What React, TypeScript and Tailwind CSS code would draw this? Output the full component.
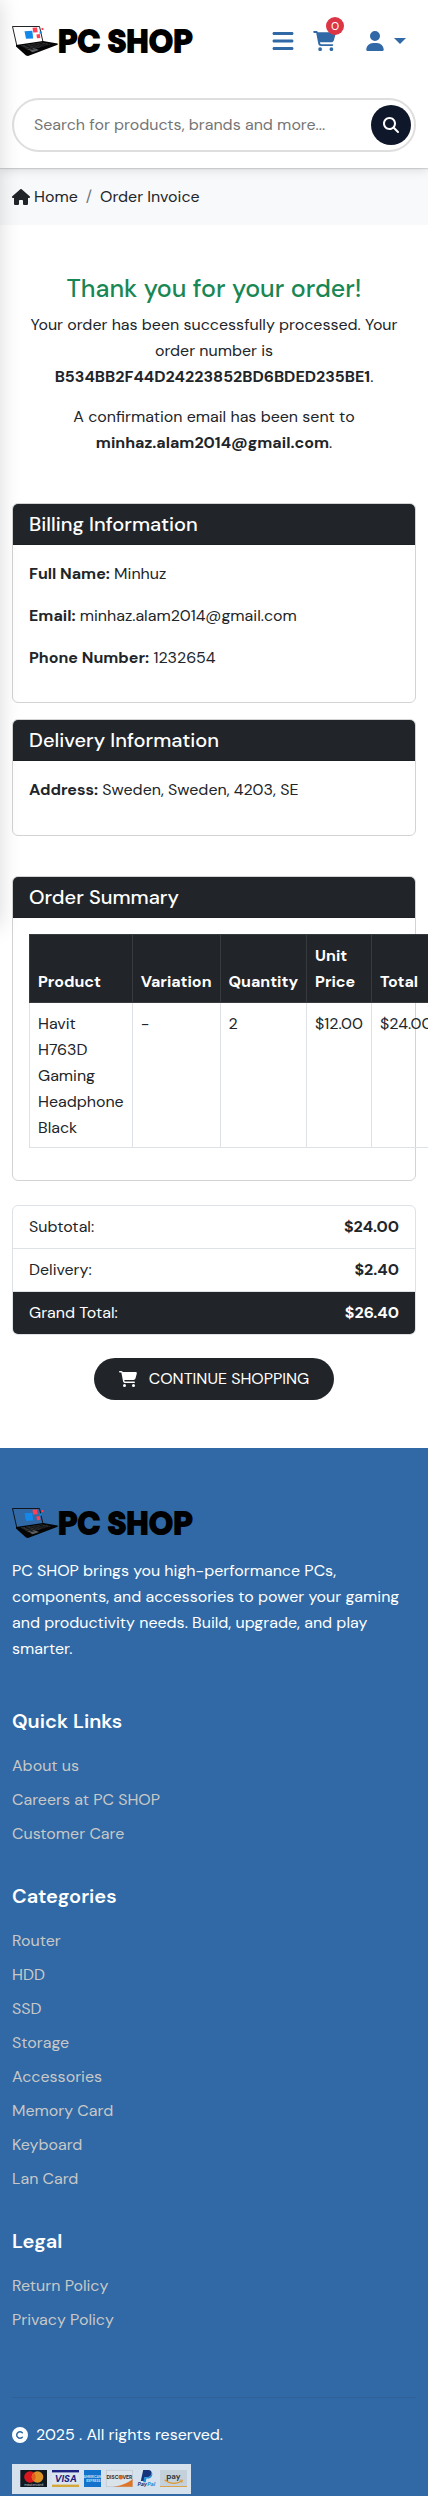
import React from 'react';
import {
  FaBars,
  FaCartShopping,
  FaCopyright,
  FaHouse,
  FaMagnifyingGlass,
  FaUser,
} from 'react-icons/fa6';

function Logo() {
  return (
    <svg viewBox="0 0 190 32" className="block h-8 w-[190px] overflow-visible" role="img" aria-label="PC SHOP">
      <path d="M0.5 1.5H27.5L31 17L5 21.5Z" fill="none" stroke="#0b0b0b" strokeWidth="0.9" strokeLinejoin="round" />
      <path d="M4 20L31 16L45.7 18.6V19.8L16 31L14 30.4L4 21.6Z" fill="#050505" />
      <path d="M8.5 20.8L29.5 17.6L38.5 19.3L17 25.2Z" fill="#4c4f52" />
      <path d="M9 21.6L31 18M11 22.7L34 18.7M13.5 24L37 19.4M13 20.2L21 24.2M18 19.5L26 23M23 18.8L31 21.6M27.5 18L35 20.4" stroke="#050505" strokeWidth="0.7" />
      <path d="M17.5 25.5L24 23.8L27 25L20.5 27.2Z" fill="#5c5f62" />
      <path d="M12.5 6.2L20.3 5.8L21.2 13.4L14 13.8Z" fill="#1488e8" />
      <path d="M20.5 2.8L25 2.4L25.7 7.2L21.2 7.6Z" fill="#ff4158" />
      <path d="M24.4 9.4L27.8 9.1L28.3 13L25 13.3Z" fill="#ff4158" />
      <path d="M27.6 6.4H29.8V8.6H27.6Z" fill="#1488e8" />
      <path d="M29.3 3.2L31.2 2.8L31.6 4.8L29.7 5.2Z" fill="#ff4158" />
      <text x="46" y="27" fontFamily="'DM Sans', sans-serif" fontSize="31" fontWeight="900" stroke="#000" strokeWidth="1.8" fill="#000">
        PC SHOP
      </text>
    </svg>
  );
}

function PaymentMethods() {
  return (
    <svg viewBox="0 0 179 30" className="block h-[30px] w-[179px]" role="img" aria-label="Accepted payment methods" fontFamily="'DM Sans', sans-serif">
      <rect width="179" height="30" fill="#d5e1ec" />
      <rect x="8.3" y="6" width="26.7" height="17" fill="#101820" />
      <circle cx="18" cy="13" r="5.8" fill="#d8171f" />
      <circle cx="25.5" cy="13" r="5.8" fill="#dd9226" />
      <path d="M21.7 8.6a5.8 5.8 0 0 1 0 8.8a5.8 5.8 0 0 1 0-8.8Z" fill="#e35f1c" />
      <text x="21.7" y="21.8" fontSize="3.6" textAnchor="middle" fill="#c5ccd2">mastercard</text>
      <rect x="40" y="6" width="27" height="17" fill="#dbe5ef" />
      <rect x="40" y="6" width="27" height="2.4" fill="#1c2380" />
      <rect x="40" y="20.6" width="27" height="2.4" fill="#d6a83a" />
      <text x="53.7" y="18" fontSize="9.5" fontWeight="800" fontStyle="italic" textAnchor="middle" fill="#1c2380">VISA</text>
      <rect x="72" y="6" width="17" height="17" fill="#1272cc" />
      <text x="80.5" y="14" fontSize="3.4" fontWeight="700" textAnchor="middle" fill="#cfe2f3">AMERICAN</text>
      <text x="81.4" y="18.4" fontSize="3.4" fontWeight="700" textAnchor="middle" fill="#cfe2f3">EXPRESS</text>
      <rect x="94.2" y="6.2" width="26.4" height="16.6" fill="#dbe3ea" stroke="#b2bbc4" strokeWidth="0.5" />
      <path d="M120.6 15V22.8H101C109 21.8 116 19 120.6 15Z" fill="#dc752a" />
      <text x="107.4" y="15.2" fontSize="5.2" fontWeight="700" textAnchor="middle" fill="#26292d">DISCOVER</text>
      <circle cx="108.8" cy="13.4" r="2.1" fill="#e2661b" />
      <path d="M131.2 6H136.2C139 6 140.2 7.8 139.5 10C138.8 12.4 137 13.3 134.5 13.3H132.6L131.9 17H128.8Z" fill="#16347c" />
      <path d="M139.9 8.6C140.9 10 140.4 14 136.4 14.6H134.4L133.7 18.3H131.2L132.2 13.3H134.5C137.3 13.3 139.6 12 139.9 8.6Z" fill="#1a8fd6" />
      <text x="134.3" y="22.3" fontSize="5.4" fontWeight="800" fontStyle="italic" textAnchor="middle" fill="#16347c">
        Pay<tspan fill="#1a8fd6">Pal</tspan>
      </text>
      <rect x="148" y="6" width="27" height="17" fill="#c4d0da" />
      <rect x="148" y="22.1" width="27" height="0.9" fill="#dc9c3c" />
      <text x="161.3" y="14.6" fontSize="8" fontWeight="600" textAnchor="middle" fill="#2a3036">pay</text>
      <path d="M153 16.2C158 20.3 165 20.2 169.6 17" fill="none" stroke="#df9426" strokeWidth="1.1" strokeLinecap="round" />
      <path d="M167.6 16.2L170.3 16L169.8 18.8" fill="none" stroke="#df9426" strokeWidth="0.9" />
    </svg>
  );
}

function Header() {
  return (
    <header className="relative z-10 bg-white px-3 pt-[25px] pb-4 shadow-[0_1px_1px_rgba(0,0,0,0.12),0_2px_10px_rgba(0,0,0,0.12)]">
      <div className="flex items-start justify-between">
        <a href="#">
          <Logo />
        </a>
        <div className="flex h-8 items-center text-[#3069a5]">
          <button type="button" aria-label="Menu">
            <FaBars className="h-6 w-[22px]" />
          </button>
          <a href="#" aria-label="Cart" className="relative ml-[19px]">
            <FaCartShopping className="h-5 w-[23px]" />
            <span className="absolute -top-[14px] left-[13px] flex size-[18px] items-center justify-center rounded-full bg-[#dc3545] text-xs leading-none text-white">
              0
            </span>
          </a>
          <button type="button" aria-label="Account" className="mr-[10px] ml-[30px] flex items-center gap-[10px]">
            <FaUser className="h-5 w-[18px]" />
            <span className="border-x-[6px] border-t-[6px] border-x-transparent border-t-[#3069a5]" />
          </button>
        </div>
      </div>
      <form
        className="mt-[41px] flex items-center rounded-full border-2 border-[#dedede] py-[5px] pr-[3px] pl-5"
        onSubmit={(e) => e.preventDefault()}
      >
        <input
          type="text"
          aria-label="Search for products, brands and more"
          placeholder="Search for products, brands and more..."
          className="min-w-0 flex-1 bg-transparent text-base outline-none placeholder:text-[#757575]"
        />
        <button type="submit" aria-label="Search" className="flex size-10 shrink-0 items-center justify-center rounded-full bg-[#0f172a] text-white">
          <FaMagnifyingGlass className="size-4" />
        </button>
      </form>
    </header>
  );
}

function Card({ title, children }: { title: string; children: React.ReactNode }) {
  return (
    <section className="rounded-md border border-[#d3d3d4] bg-white">
      <h2 className="rounded-t-[5px] border-b border-[#1c1f23] bg-[#212529] px-4 py-2 text-xl leading-6 font-medium text-white">
        {title}
      </h2>
      {children}
    </section>
  );
}

const columns = ['Product', 'Variation', 'Quantity', 'Unit Price', 'Total'];

const footerGroups = [
  { title: 'Quick Links', links: ['About us', 'Careers at PC SHOP', 'Customer Care'] },
  {
    title: 'Categories',
    links: ['Router', 'HDD', 'SSD', 'Storage', 'Accessories', 'Memory Card', 'Keyboard', 'Lan Card'],
  },
  { title: 'Legal', links: ['Return Policy', 'Privacy Policy'] },
];

export default function App() {
  return (
    <div className="relative overflow-x-clip bg-white font-['DM_Sans','Open_Sans',sans-serif] text-base leading-[26px] text-[#212529]">
      <div className="pointer-events-none absolute top-0 right-full z-20 h-[926px] w-64 shadow-[0_0_20px_rgba(0,0,0,0.15)]" />
      <Header />

      <nav aria-label="Breadcrumb" className="flex items-center bg-[#f8f9fb] px-3 pt-4 pb-[15px]">
        <a href="#" className="flex items-center gap-1">
          <FaHouse className="h-4 w-[18px]" />
          Home
        </a>
        <span className="px-2 text-[#6c757d]">/</span>
        <span>Order Invoice</span>
      </nav>

      <main className="px-3 pt-[49px] pb-12">
        <div className="text-center">
          <h1 className="mb-2 text-[25px] leading-[30px] font-medium text-[#198754]">Thank you for your order!</h1>
          <p className="mb-[14px]">
            Your order has been successfully processed. Your order number is{' '}
            <strong>B534BB2F44D24223852BD6BDED235BE1</strong>.
          </p>
          <p>
            A confirmation email has been sent to
            <br />
            <strong>minhaz.alam2014@gmail.com</strong>.
          </p>
        </div>

        <div className="mt-[47px] flex flex-col gap-4">
          <Card title="Billing Information">
            <div className="space-y-4 px-4 pt-4 pb-[31px]">
              <p><strong>Full Name:</strong> Minhuz</p>
              <p><strong>Email:</strong> minhaz.alam2014@gmail.com</p>
              <p><strong>Phone Number:</strong> 1232654</p>
            </div>
          </Card>
          <Card title="Delivery Information">
            <div className="px-4 pt-4 pb-8">
              <p><strong>Address:</strong> Sweden, Sweden, 4203, SE</p>
            </div>
          </Card>
        </div>

        <div className="mt-10">
          <Card title="Order Summary">
            <div className="px-4 pt-4 pb-8">
              <table className="w-full border-collapse">
                <thead>
                  <tr>
                    {columns.map((c) => (
                      <th key={c} className="border border-[#373b3e] bg-[#212529] px-2 pt-2 pb-[7px] text-left align-bottom font-bold text-white">
                        {c}
                      </th>
                    ))}
                  </tr>
                </thead>
                <tbody>
                  <tr>
                    {['Havit H763D Gaming Headphone Black', '-', '2', '$12.00', '$24.00'].map((c) => (
                      <td key={c} className="border border-[#dee2e6] px-2 pt-2 pb-1.5 align-top">
                        {c}
                      </td>
                    ))}
                  </tr>
                </tbody>
              </table>
            </div>
          </Card>
        </div>

        <ul className="mt-6 overflow-hidden rounded-md border border-[#dee2e6]">
          <li className="flex justify-between border-b border-[#dee2e6] px-4 py-2">
            Subtotal: <strong>$24.00</strong>
          </li>
          <li className="flex justify-between border-b border-[#dee2e6] px-4 py-2">
            Delivery: <strong>$2.40</strong>
          </li>
          <li className="flex justify-between bg-[#212529] px-4 py-2 text-white">
            Grand Total: <strong>$26.40</strong>
          </li>
        </ul>

        <div className="mt-[23px] flex justify-center">
          <a href="#" className="flex items-center gap-3 rounded-full bg-[#212529] px-[25px] py-2 text-white">
            <FaCartShopping className="h-4 w-[18px]" />
            CONTINUE SHOPPING
          </a>
        </div>
      </main>

      <footer className="bg-[#3069a5] px-3 pt-[59px] pb-0.5 text-white">
        <Logo />
        <p className="mt-[19px]">
          PC SHOP brings you high-performance PCs, components, and accessories to power your gaming and productivity
          needs. Build, upgrade, and play smarter.
        </p>
        <div className="mt-[47px] flex flex-col gap-[37px]">
          {footerGroups.map((g) => (
            <section key={g.title}>
              <h3 className="mb-5 text-xl leading-6 font-semibold">{g.title}</h3>
              <ul className="space-y-2 text-[#c8c8c8]">
                {g.links.map((l) => (
                  <li key={l}>
                    <a href="#">{l}</a>
                  </li>
                ))}
              </ul>
            </section>
          ))}
        </div>
        <hr className="mt-16 mb-6 border-[#2f6096]" />
        <p className="mb-4 flex items-center gap-2">
          <FaCopyright className="size-4" />
          2025 . All rights reserved.
        </p>
        <PaymentMethods />
      </footer>
    </div>
  );
}
